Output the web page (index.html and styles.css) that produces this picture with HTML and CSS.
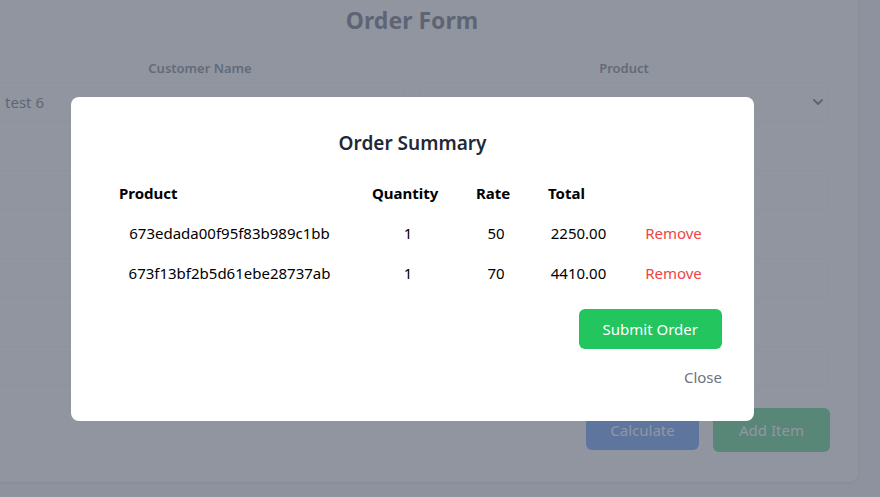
FILE: index.html
```html
<!DOCTYPE html>
<html>
<head>
<meta charset="utf-8">
<link rel="stylesheet" href="styles.css">
</head>
<body>
<div class="page">
  <div class="card">
    <h1 class="form-title">Order Form</h1>
    <div class="grid">
      <div class="field">
        <label class="label">Customer Name</label>
        <div class="input">test 6</div>
      </div>
      <div class="field">
        <label class="label">Product</label>
        <div class="input select">
          <span></span>
          <svg class="chev" width="12" height="8" viewBox="0 0 12 8"><path d="M2 2l4 4 4-4" fill="none" stroke="#374151" stroke-width="2" stroke-linecap="round" stroke-linejoin="round"/></svg>
        </div>
      </div>
      <div class="field">
        <label class="label">Quantity</label>
        <div class="input"></div>
      </div>
      <div class="field">
        <label class="label">Rate</label>
        <div class="input"></div>
      </div>
      <div class="field">
        <label class="label">Discount</label>
        <div class="input"></div>
      </div>
      <div class="field">
        <label class="label">Tax</label>
        <div class="input"></div>
      </div>
      <div class="field">
        <label class="label">Notes</label>
        <div class="input"></div>
      </div>
      <div class="field">
        <label class="label">Total</label>
        <div class="input"></div>
      </div>
    </div>
    <div class="actions">
      <button class="btn btn-blue">Calculate</button>
      <button class="btn btn-green add">Add Item</button>
    </div>
  </div>
</div>

<div class="overlay">
  <div class="modal">
    <h2 class="modal-title">Order Summary</h2>
    <table class="summary">
      <colgroup>
        <col class="c1"><col class="c2"><col class="c3"><col class="c4"><col class="c5">
      </colgroup>
      <thead>
        <tr><th>Product</th><th>Quantity</th><th>Rate</th><th>Total</th><th></th></tr>
      </thead>
      <tbody>
        <tr><td>673edada00f95f83b989c1bb</td><td>1</td><td>50</td><td>2250.00</td><td><span class="remove">Remove</span></td></tr>
        <tr><td>673f13bf2b5d61ebe28737ab</td><td>1</td><td>70</td><td>4410.00</td><td><span class="remove">Remove</span></td></tr>
      </tbody>
    </table>
    <div class="modal-actions">
      <button class="btn btn-green submit">Submit Order</button>
      <span class="close">Close</span>
    </div>
  </div>
</div>
</body>
</html>
```

FILE: styles.css
```css
* { box-sizing: border-box; }
html, body { margin: 0; padding: 0; }
body {
  background: #f3f4f6;
  font-family: "Noto Sans", "Open Sans", sans-serif;
  overflow: hidden;
  height: 497px;
}
.page { padding: 0; }
.card {
  width: 892px;
  margin: -20px 0 0 -34px;
  background: #fff;
  border-radius: 8px;
  box-shadow: 0 1px 3px rgba(0,0,0,0.1), 0 1px 2px rgba(0,0,0,0.06);
  padding: 24px 30px 30px 30px;
}
.form-title {
  margin: 0 0 22px;
  text-align: center;
  font-size: 23px;
  line-height: 32px;
  font-weight: 700;
  color: #374151;
}
.grid {
  display: grid;
  grid-template-columns: 1fr 1fr;
  column-gap: 16px;
  row-gap: 24px;
}
.field { display: flex; flex-direction: column; gap: 4px; }
.label {
  text-align: center;
  font-size: 13px;
  line-height: 20px;
  font-weight: 600;
  color: #4b5563;
}
.input {
  height: 40px;
  border: 1px solid #f3f4f6;
  border-radius: 6px;
  padding: 0 8px;
  display: flex;
  align-items: center;
  font-size: 15px;
  color: #374151;
}
.select { justify-content: space-between; padding-right: 3px; }
.actions {
  display: flex;
  justify-content: flex-end;
  gap: 14px;
  margin-top: 23px;
  margin-right: -2px;
}
.btn {
  border: none;
  border-radius: 6px;
  font-family: inherit;
  font-size: 15px;
  color: #fff;
  padding: 0 24px;
  height: 41px;
}
.btn-blue { background: #3b82f6; width: 113px; }
.btn-green { background: #22c55e; }
.add { height: 44px; width: 117px; margin-top: -1px; }

.overlay {
  position: fixed;
  inset: 0;
  background: rgba(107,114,128,0.75);
  display: flex;
  align-items: flex-start;
  padding: 97px 0 0 71px;
}
.modal {
  width: 683px;
  background: #fff;
  border-radius: 8px;
  padding: 32px;
}
.modal-title {
  margin: 0 0 16px;
  text-align: center;
  font-size: 19px;
  line-height: 28px;
  font-weight: 600;
  color: #1f2937;
}
.summary {
  width: 619px;
  border-collapse: collapse;
  table-layout: fixed;
  font-size: 15px;
  color: #000;
}
.c1 { width: 253px; } .c2 { width: 104px; } .c3 { width: 72px; } .c4 { width: 93px; } .c5 { width: 97px; }
.summary th {
  text-align: left;
  font-weight: 700;
  padding: 8px 16px;
  line-height: 24px;
  white-space: nowrap;
}
.summary td {
  text-align: center;
  padding: 8px 0;
  line-height: 24px;
  white-space: nowrap;
}
.remove { color: #ef4444; }
.modal-actions {
  display: flex;
  flex-direction: column;
  align-items: flex-end;
  margin-top: 16px;
  gap: 16px;
}
.submit {
  height: 40px;
  padding: 0 24px;
  font-size: 15px;
  line-height: 24px;
}
.close {
  font-size: 15px;
  line-height: 24px;
  color: #6b7280;
}
```
